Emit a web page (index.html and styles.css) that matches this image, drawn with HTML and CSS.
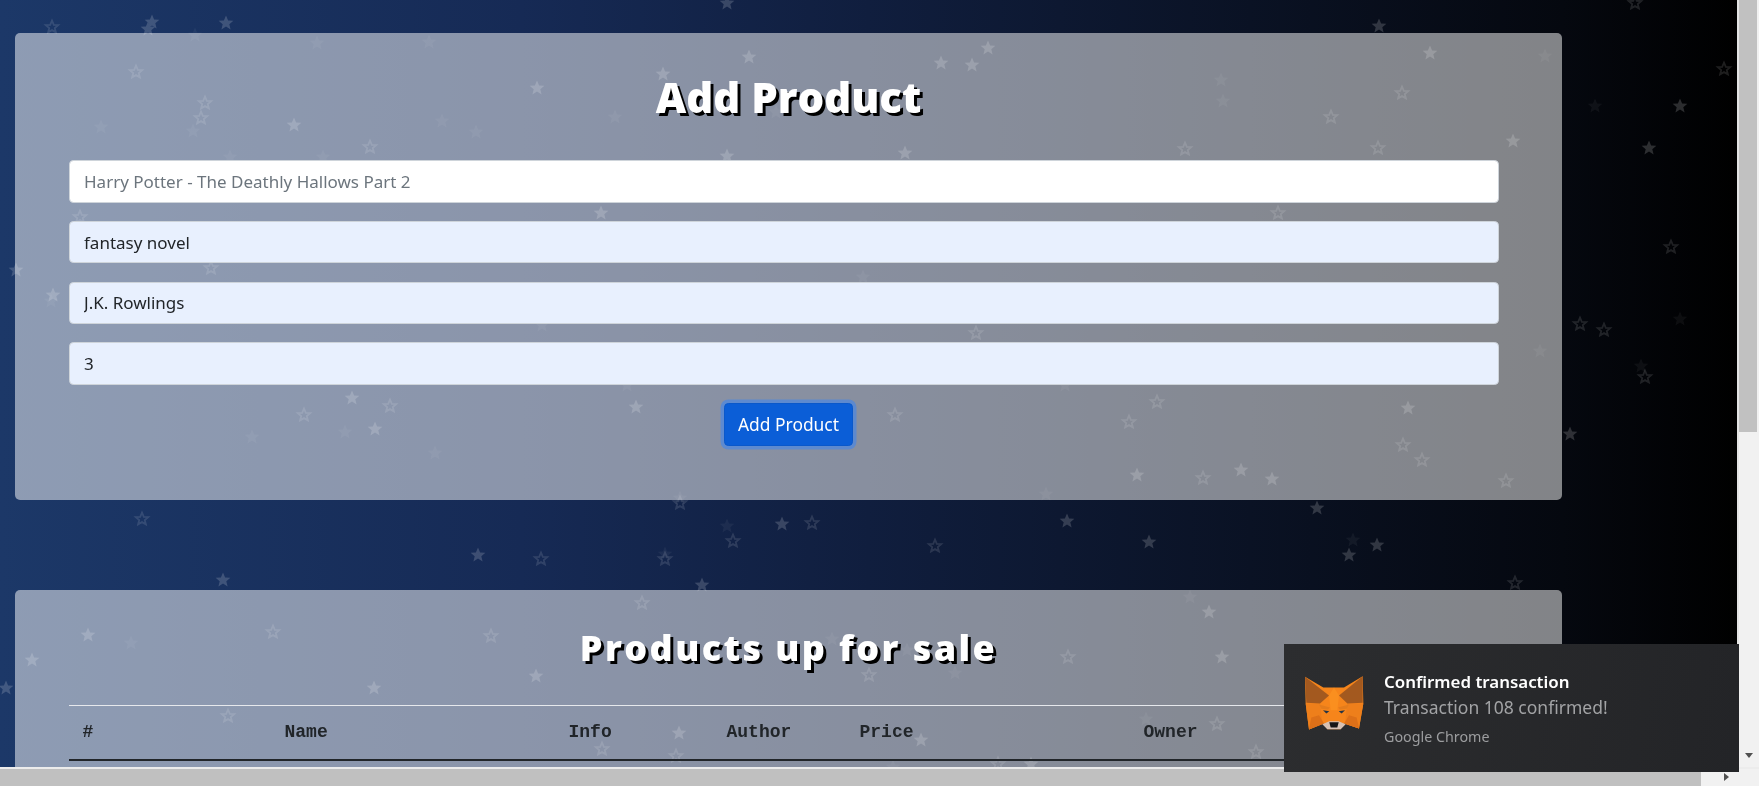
FILE: index.html
```html
<!DOCTYPE html>
<html lang="en">
<head>
<meta charset="utf-8">
<title>Add Product</title>
<link rel="stylesheet" href="styles.css">
</head>
<body>
<div class="window">
  <div class="upper">
    <main class="page">
      <svg class="stars" width="1737" height="768" aria-hidden="true">
        <defs>
          <path id="f" d="M0-7.5 2.1-2.6 7.4-2.2 3.3 1.2 4.6 6.4 0 3.6-4.6 6.4-3.3 1.2-7.4-2.2-2.1-2.6Z"/>
          <path id="o" d="M0-6.5 1.8-2.2 6.3-1.9 2.8 1 3.9 5.4 0 3.1-3.9 5.4-2.8 1-6.3-1.9-1.8-2.2Z"/>
        </defs>
        <g class="solid">
          <use href="#f" x="223" y="580"/><use href="#f" x="478" y="555"/><use href="#f" x="782" y="524"/><use href="#f" x="1067" y="521"/><use href="#f" x="1149" y="542"/><use href="#f" x="1317" y="508"/><use href="#f" x="1377" y="545"/><use href="#f" x="1349" y="555"/><use href="#f" x="1209" y="612"/><use href="#f" x="1222" y="657"/><use href="#f" x="921" y="740"/><use href="#f" x="1031" y="764"/><use href="#f" x="1379" y="26"/><use href="#f" x="988" y="48"/><use href="#f" x="941" y="63"/><use href="#f" x="972" y="65"/><use href="#f" x="1430" y="53"/><use href="#f" x="1513" y="141"/><use href="#f" x="905" y="153"/><use href="#f" x="1680" y="106"/><use href="#f" x="1649" y="148"/><use href="#f" x="152" y="22"/><use href="#f" x="148" y="29"/><use href="#f" x="226" y="23"/><use href="#f" x="749" y="57"/><use href="#f" x="663" y="74"/><use href="#f" x="537" y="88"/><use href="#f" x="294" y="125"/><use href="#f" x="727" y="156"/><use href="#f" x="601" y="213"/><use href="#f" x="16" y="270"/><use href="#f" x="53" y="295"/><use href="#f" x="88" y="635"/><use href="#f" x="32" y="660"/><use href="#f" x="6" y="688"/><use href="#f" x="374" y="688"/><use href="#f" x="536" y="676"/><use href="#f" x="679" y="733"/><use href="#f" x="352" y="398"/><use href="#f" x="375" y="429"/><use href="#f" x="636" y="407"/><use href="#f" x="1408" y="408"/><use href="#f" x="1137" y="475"/><use href="#f" x="1241" y="470"/><use href="#f" x="1272" y="479"/><use href="#f" x="1570" y="434"/><use href="#f" x="727" y="3"/><use href="#f" x="702" y="585"/>
        </g>
        <g class="solid faint">
          <use href="#f" x="665" y="554"/><use href="#f" x="727" y="526"/><use href="#f" x="1353" y="540"/><use href="#f" x="1190" y="597"/><use href="#f" x="832" y="639"/><use href="#f" x="907" y="650"/><use href="#f" x="955" y="673"/><use href="#f" x="1046" y="494"/><use href="#f" x="1545" y="56"/><use href="#f" x="1221" y="80"/><use href="#f" x="1223" y="101"/><use href="#f" x="1595" y="106"/><use href="#f" x="195" y="35"/><use href="#f" x="429" y="42"/><use href="#f" x="317" y="43"/><use href="#f" x="101" y="127"/><use href="#f" x="193" y="131"/><use href="#f" x="442" y="121"/><use href="#f" x="476" y="132"/><use href="#f" x="615" y="117"/><use href="#f" x="776" y="112"/><use href="#f" x="323" y="157"/><use href="#f" x="230" y="157"/><use href="#f" x="863" y="277"/><use href="#f" x="131" y="643"/><use href="#f" x="345" y="432"/><use href="#f" x="252" y="437"/><use href="#f" x="627" y="385"/><use href="#f" x="435" y="453"/><use href="#f" x="542" y="325"/><use href="#f" x="51" y="301"/><use href="#f" x="680" y="498"/><use href="#f" x="1540" y="351"/><use href="#f" x="1680" y="319"/><use href="#f" x="1641" y="366"/><use href="#f" x="1065" y="385"/><use href="#f" x="893" y="767"/><use href="#f" x="1146" y="719"/>
        </g>
        <g class="hollow">
          <use href="#o" x="142" y="519"/><use href="#o" x="541" y="559"/><use href="#o" x="665" y="559"/><use href="#o" x="680" y="503"/><use href="#o" x="642" y="603"/><use href="#o" x="812" y="523"/><use href="#o" x="733" y="541"/><use href="#o" x="935" y="546"/><use href="#o" x="1515" y="583"/><use href="#o" x="1068" y="657"/><use href="#o" x="869" y="675"/><use href="#o" x="1217" y="724"/><use href="#o" x="1256" y="752"/><use href="#o" x="998" y="764"/><use href="#o" x="1635" y="3"/><use href="#o" x="1402" y="93"/><use href="#o" x="1331" y="117"/><use href="#o" x="1185" y="149"/><use href="#o" x="1378" y="148"/><use href="#o" x="1278" y="213"/><use href="#o" x="1724" y="69"/><use href="#o" x="1671" y="247"/><use href="#o" x="52" y="27"/><use href="#o" x="136" y="72"/><use href="#o" x="205" y="103"/><use href="#o" x="201" y="118"/><use href="#o" x="370" y="147"/><use href="#o" x="80" y="217"/><use href="#o" x="211" y="268"/><use href="#o" x="273" y="632"/><use href="#o" x="491" y="636"/><use href="#o" x="228" y="716"/><use href="#o" x="602" y="749"/><use href="#o" x="676" y="756"/><use href="#o" x="390" y="406"/><use href="#o" x="304" y="415"/><use href="#o" x="976" y="333"/><use href="#o" x="895" y="415"/><use href="#o" x="1157" y="402"/><use href="#o" x="1129" y="422"/><use href="#o" x="1403" y="445"/><use href="#o" x="1422" y="460"/><use href="#o" x="1203" y="478"/><use href="#o" x="1506" y="481"/><use href="#o" x="1580" y="324"/><use href="#o" x="1604" y="330"/><use href="#o" x="1645" y="377"/>
        </g>
      </svg>

      <section class="card card-form">
        <h1 class="title-add">Add Product</h1>
        <form class="fields">
          <input class="field" type="text" placeholder="Harry Potter - The Deathly Hallows Part 2">
          <input class="field filled" type="text" value="fantasy novel">
          <input class="field filled" type="text" value="J.K. Rowlings">
          <input class="field filled" type="text" value="3">
        </form>
        <div class="actions"><button class="btn" type="button">Add Product</button></div>
      </section>

      <section class="card card-table">
        <h2 class="title-sale">Products up for sale</h2>
        <table class="products">
          <colgroup>
            <col class="c-id"><col class="c-name"><col class="c-info"><col class="c-author"><col class="c-price"><col class="c-owner">
          </colgroup>
          <thead>
            <tr><th>#</th><th>Name</th><th>Info</th><th>Author</th><th>Price</th><th>Owner</th></tr>
          </thead>
        </table>
      </section>
    </main>
    <aside class="vbar">
      <div class="vthumb"></div>
      <div class="vtrack"></div>
      <div class="arrow-down"></div>
    </aside>
  </div>
  <div class="hbar">
    <div class="hthumb"></div>
    <div class="htrack"><div class="arrow-right"></div></div>
  </div>

  <div class="toast">
    <svg class="fox" viewBox="40 45 180 170" width="60" height="57" aria-hidden="true">
      <polygon fill="#f6851b" points="43,50 98,82 160,82 216,48 218,130 205,205 160,190 150,207 110,207 100,190 55,208 45,130"/>
      <polygon fill="#ee7f1b" points="45,130 88,130 95,190 55,208"/>
      <polygon fill="#ee7f1b" points="218,130 170,130 163,190 205,205"/>
      <polygon fill="#a3591f" points="43,50 115,106 88,130 47,128"/>
      <polygon fill="#a3591f" points="216,48 145,106 170,130 216,128"/>
      <polygon fill="#dd7018" points="62,172 85,165 100,190 55,208"/>
      <polygon fill="#dd7018" points="198,172 175,165 160,190 205,205"/>
      <polygon fill="#fa8f1f" points="115,106 130,82 145,106 140,150 120,150"/>
      <polygon fill="#e47c1c" points="85,133 118,142 112,148 92,146"/>
      <polygon fill="#e47c1c" points="175,133 142,142 148,148 168,146"/>
      <polygon fill="#233447" points="97,150 116,153 107,160"/>
      <polygon fill="#233447" points="163,150 144,153 153,160"/>
      <polygon fill="#d7c1b3" points="95,192 116,183 144,183 165,192 150,207 110,207"/>
      <polygon fill="#161616" points="116,186 144,186 140,202 120,202"/>
    </svg>
    <div class="toast-text">
      <div class="toast-title">Confirmed transaction</div>
      <div class="toast-msg">Transaction 108 confirmed!</div>
      <div class="toast-src">Google Chrome</div>
    </div>
  </div>
</div>
</body>
</html>
```

FILE: styles.css
```css
* { box-sizing: border-box; }
html, body { margin: 0; height: 100%; overflow: hidden; }
body { font-family: "Noto Sans", "Open Sans", sans-serif; color: #212529; }

.window {
  position: relative;
  width: 1759px;
  height: 786px;
  display: flex;
  flex-direction: column;
  overflow: hidden;
}
.upper { flex: 1; min-height: 0; display: flex; }

.page {
  position: relative;
  width: 1737px;
  overflow: hidden;
  padding: 33px 175px 0 15px;
  background: linear-gradient(to right, #1c3868 0%, #162a55 30%, #101e3e 50%, #0a1224 72%, #05080f 90%, #000 100%);
}
.stars { position: absolute; left: 0; top: 0; }
.solid { fill: #fff; opacity: .17; }
.solid.faint { opacity: .05; }
.hollow { fill: none; stroke: #fff; stroke-width: 1.8; opacity: .12; }

.card {
  position: relative;
  background: rgba(255, 255, 255, .5);
  border-radius: 5px;
}
.card-form { height: 467px; padding-top: 34px; margin-bottom: 90px; }
.card-table { height: 400px; padding-top: 35px; }

.title-add, .title-sale {
  margin: 0;
  text-align: center;
  color: #fff;
  font-family: "Open Sans", sans-serif;
  font-weight: 800;
  text-shadow: 3px 3px 0 #000;
}
.title-add {
  height: 60px;
  line-height: 60px;
  font-size: 42px;
}
.title-sale {
  height: 50px;
  line-height: 46px;
  font-size: 36px;
  letter-spacing: 2.4px;
}

.fields {
  display: flex;
  flex-direction: column;
  gap: 18.1px;
  margin: 33px 63px 0 53.5px;
}
.field {
  display: block;
  width: 100%;
  height: 42.7px;
  padding: 0 14.5px;
  border: 1px solid #ced4da;
  border-radius: 4.4px;
  background: #fff;
  color: #212529;
  font: 400 17px "Noto Sans", "Open Sans", sans-serif;
  outline: 0;
}
.field::placeholder { color: #6c757d; opacity: 1; }
.field.filled { background: #e8f0fe; }

.actions { display: flex; justify-content: center; margin-top: 18.4px; }
.btn {
  width: 129px;
  height: 43px;
  border: 1px solid #0a58ca;
  border-radius: 4.4px;
  background: #0b5ed7;
  color: #fff;
  font: 400 17.4px "Noto Sans", "Open Sans", sans-serif;
  padding: 0 0 2px;
  box-shadow: 0 0 0 3.5px rgba(49, 132, 253, .5);
}

.products {
  width: 1430.5px;
  margin: 30px 0 0 53.5px;
  table-layout: fixed;
  border-collapse: collapse;
  font: 700 18px "Liberation Mono", monospace;
  color: #212529;
}
.products thead tr { border-top: 1px solid #e6e8ec; border-bottom: 2px solid #212529; }
.products th { height: 54px; padding: 0 14px; text-align: left; font-weight: 700; }
.c-id { width: 202px; }
.c-name { width: 284px; }
.c-info { width: 158px; }
.c-author { width: 133px; }
.c-price { width: 284px; }

.vbar {
  flex: 1;
  display: flex;
  flex-direction: column;
  position: relative;
  background: #f1f1f1;
  border-left: 2px solid #e4e4e4;
  padding-right: 2px;
}
.vthumb { height: 432px; background: #c1c1c1; }
.vtrack { flex: 1; }
.arrow-down {
  position: absolute;
  left: 6px;
  top: 753px;
  border-left: 4.5px solid transparent;
  border-right: 4.5px solid transparent;
  border-top: 5px solid #505050;
}

.hbar { height: 19px; display: flex; border-top: 2px solid #ececec; background: #f1f1f1; }
.hthumb { width: 1701px; background: #c0c0c0; }
.htrack { flex: 1; position: relative; }
.arrow-right {
  position: absolute;
  left: 23px;
  top: 4px;
  border-top: 4.5px solid transparent;
  border-bottom: 4.5px solid transparent;
  border-left: 5px solid #505050;
}

.toast {
  position: absolute;
  left: 1284px;
  top: 644px;
  width: 455px;
  height: 128px;
  display: flex;
  align-items: flex-start;
  padding: 31px 0 0 20px;
  background: linear-gradient(100deg, #2c2d2f, #232427);
}
.fox { flex: none; }
.toast-text { margin: -5px 0 0 20px; }
.toast-title { font-size: 16.9px; line-height: 24px; font-weight: 600; color: #fff; }
.toast-msg { font-size: 17.5px; line-height: 26px; color: #a2a3a5; }
.toast-src { font-size: 14.3px; line-height: 20px; margin-top: 7px; color: #9c9d9f; }
```
